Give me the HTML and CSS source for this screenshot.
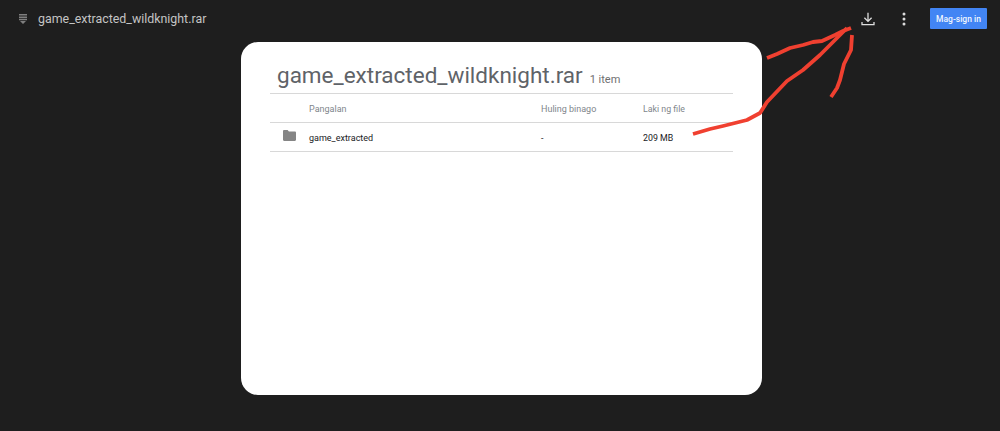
FILE: index.html
```html
<!DOCTYPE html>
<html lang="tl">
<head>
<meta charset="utf-8">
<title>game_extracted_wildknight.rar</title>
<link rel="stylesheet" href="styles.css">
</head>
<body>
<header class="topbar">
  <svg class="file-icon" viewBox="0 0 8 10" width="8" height="10"><path d="M0 0h8v1.600H0zM0 2.400h8V4H0zM0 4.800h8v1.400H0zM1 7h6L4 10z" fill="#7f7f7f"/></svg>
  <span class="file-name">game_extracted_wildknight.rar</span>
  <span class="spacer"></span>
  <svg class="dl-icon" viewBox="0 0 14 14" width="14" height="14"><path d="M7 .8v8.200M3.400 5.800 7 9.400l3.600-3.600M1 10v2.600h12V10" fill="none" stroke="#dedede" stroke-width="1.300"/></svg>
  <svg class="more-icon" viewBox="0 0 4 14" width="4" height="14"><circle cx="2" cy="2" r="1.500" fill="#dcdcdc"/><circle cx="2" cy="7" r="1.500" fill="#dcdcdc"/><circle cx="2" cy="12" r="1.500" fill="#dcdcdc"/></svg>
  <button class="signin">Mag-sign in</button>
</header>
<main class="card">
  <div class="heading"><h1>game_extracted_wildknight.rar</h1><span class="count">1 item</span></div>
  <div class="row head">
    <span class="c-name">Pangalan</span><span class="c-date">Huling binago</span><span class="c-size">Laki ng file</span>
  </div>
  <div class="row item">
    <span class="c-icon"><svg viewBox="0 0 13 11" width="13" height="11"><path d="M0 1.200C0 .5.5 0 1.200 0h3.400l1.300 1.400h6c.6 0 1.100.5 1.100 1.100v7.300c0 .7-.5 1.200-1.100 1.200H1.200C.5 11 0 10.500 0 9.800z" fill="#858585"/></svg></span>
    <span class="c-name">game_extracted</span><span class="c-date">-</span><span class="c-size">209 MB</span>
  </div>
</main>
<svg class="scribble" viewBox="0 0 1000 431" width="1000" height="431">
  <g fill="none" stroke="#f04030" stroke-width="3.800" stroke-linecap="butt" stroke-linejoin="round">
    <path d="M767 58 777 54 790 48 803 45 813 42 822 41 835 35 843 31 851 28"/>
    <path d="M693 134 710 129 723 126 747 120 760 113 767 102 787 81 803 70 820 55 837 38 847 28"/>
    <path d="M852 35 851 50 844 64 840 80 837 88 831 97"/>
  </g>
</svg>
</body>
</html>
```
FILE: styles.css
```css
* { box-sizing: border-box; }
html, body { margin: 0; height: 100%; }
body {
  position: relative;
  width: 1000px;
  height: 431px;
  overflow: hidden;
  background: #1e1e1e;
  font-family: Roboto, "Liberation Sans", sans-serif;
}
.topbar {
  display: flex;
  align-items: center;
  height: 37px;
  padding: 0 13px 0 19px;
}
.file-icon { margin-right: 11px; }
.file-name { color: #c4c4c4; font-size: 12.400px; }
.spacer { flex: 1; }
.dl-icon { margin-right: 27px; }
.more-icon { margin-right: 24px; }
.signin {
  width: 57px;
  height: 21px;
  padding: 0;
  border: 0;
  border-radius: 1px;
  background: #4285f4;
  color: #f1f5fe;
  font: 500 8.500px Roboto, "Liberation Sans", sans-serif;
}
.card {
  width: 521px;
  height: 353px;
  margin: 5px 0 0 241px;
  padding: 0 29px;
  background: #fff;
  border-radius: 17px;
}
.heading {
  display: flex;
  align-items: baseline;
  height: 52px;
  padding: 18px 0 0 7px;
  border-bottom: 1px solid #d8d8d8;
}
h1 { margin: 0; color: #5f6368; font-size: 22.500px; font-weight: 400; line-height: 30px; white-space: nowrap; }
.count { margin-left: 7px; color: #6f6f6f; font-size: 11px; }
.row {
  display: flex;
  align-items: center;
  height: 29px;
  padding: 2px 0 0 39px;
  border-bottom: 1px solid #d8d8d8;
  font-size: 9px;
}
.head { color: #80868b; }
.item { position: relative; color: #202124; }
.c-icon { position: absolute; left: 13px; top: 7px; line-height: 0; }
.c-name { width: 232px; }
.c-date { width: 102px; }
.c-size { font-size: 8.800px; }
.scribble { position: absolute; left: 0; top: 0; }
```
